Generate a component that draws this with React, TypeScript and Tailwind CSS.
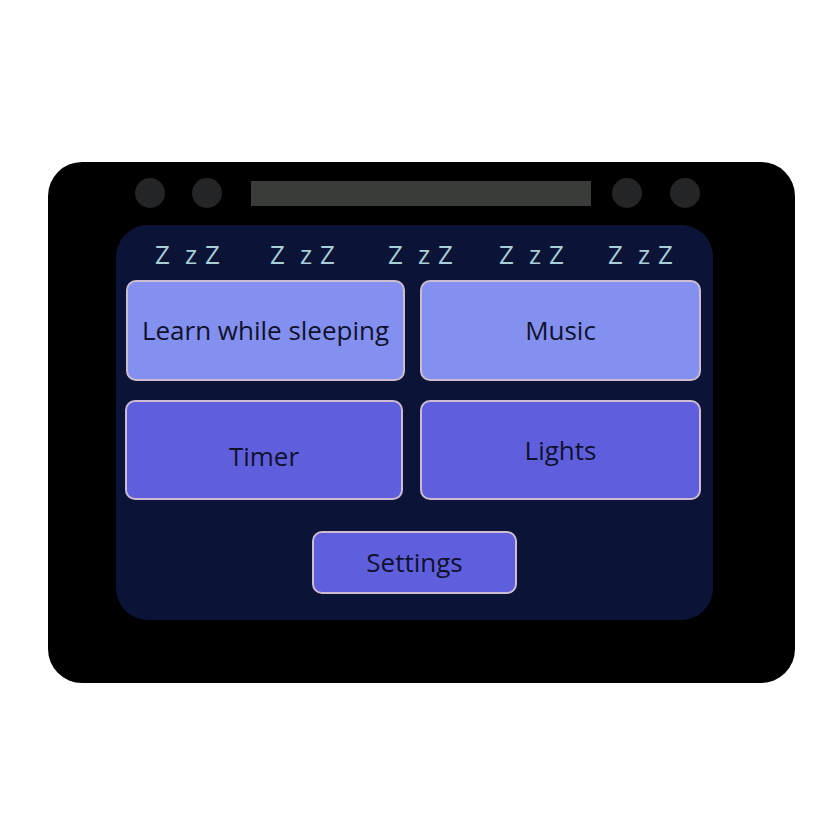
import React from "react";

const zzz = [
  { ml: "ml-[39px]" },
  { ml: "ml-[55px]" },
  { ml: "ml-[58px]" },
  { ml: "ml-[51px]" },
  { ml: "ml-[49px]" },
];

function Zzz({ className }: { className: string }) {
  return (
    <span className={`${className} inline-flex items-baseline w-[60px] shrink-0`}>
      <span>Z</span>
      <span className="ml-[15px]">z</span>
      <span className="ml-[8px]">Z</span>
    </span>
  );
}

const btn =
  "rounded-[10px] border-2 border-[#cdbccf] text-[26px] font-medium text-[#10122c] flex items-center justify-center";

export default function App() {
  return (
    <div
      className="w-[828px] h-[828px] bg-white pt-[162px] pl-[48px]"
      style={{ fontFamily: '"Open Sans", "Noto Sans", sans-serif' }}
    >
      <div className="w-[747px] h-[521px] bg-black rounded-[34px] flex flex-col">
        <div className="flex items-center h-[30px] mt-[16px] pl-[87px]">
          <div className="w-[30px] h-[30px] rounded-full bg-[#232527]" />
          <div className="w-[30px] h-[30px] rounded-full bg-[#232527] ml-[27px]" />
          <div className="w-[340px] h-[25px] bg-[#393c39] ml-[29px]" />
          <div className="w-[30px] h-[30px] rounded-full bg-[#232527] ml-[21px]" />
          <div className="w-[30px] h-[30px] rounded-full bg-[#232527] ml-[28px]" />
        </div>
        <div className="ml-[68px] mt-[17px] w-[597px] h-[395px] bg-[#0b1437] rounded-[32px] flex flex-col">
          <div className="flex items-center h-[26px] mt-[16px] text-[26px] leading-none text-[#a8cfd8]">
            {zzz.map((z, i) => (
              <Zzz key={i} className={z.ml} />
            ))}
          </div>
          <div className="grid grid-cols-[279px_281px] gap-x-[15px] gap-y-[19px] ml-[10px] mt-[13px]">
            <button className={`${btn} h-[101px] bg-[#8490ef]`}>Learn while sleeping</button>
            <button className={`${btn} h-[101px] bg-[#8490ef]`}>Music</button>
            <button className={`${btn} h-[100px] w-[278px] -ml-[1px] bg-[#5f5fdd] pt-[12px]`}>Timer</button>
            <button className={`${btn} h-[100px] bg-[#5f5fdd]`}>Lights</button>
          </div>
          <button className={`${btn} ml-[196px] mt-[31px] w-[205px] h-[63px] rounded-[8px] bg-[#5f5fdd]`}>
            Settings
          </button>
        </div>
      </div>
    </div>
  );
}
